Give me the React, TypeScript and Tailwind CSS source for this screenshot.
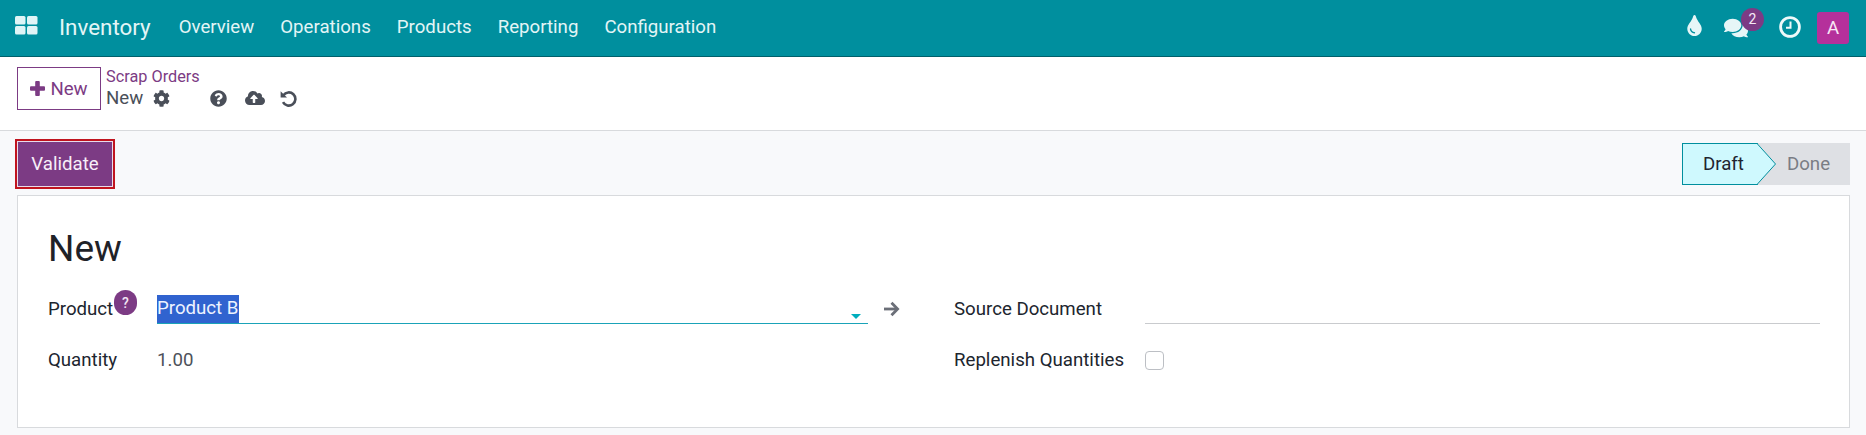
import { FaCog, FaQuestionCircle, FaCloudUploadAlt, FaTint, FaComments } from "react-icons/fa";

const menus = ["Overview", "Operations", "Products", "Reporting", "Configuration"];

function AppsIcon() {
  return (
    <svg width="23" height="19" viewBox="0 0 23 19" fill="#dff4f6">
      <rect x="0" y="0" width="10.5" height="8.5" rx="1.5" />
      <rect x="12" y="0" width="10.5" height="8.5" rx="1.5" />
      <rect x="0" y="10" width="10.5" height="8.5" rx="1.5" />
      <rect x="12" y="10" width="10.5" height="8.5" rx="1.5" />
    </svg>
  );
}

function ClockIcon() {
  return (
    <svg width="22" height="22" viewBox="0 0 22 22" fill="none" stroke="#eef9fa">
      <circle cx="11" cy="11" r="9.4" strokeWidth="2.8" />
      <path d="M11.5 5.5v6.2H7" strokeWidth="2" />
    </svg>
  );
}

function PlusIcon() {
  return (
    <svg width="15" height="15" viewBox="0 0 15 15" fill="#7c3b84">
      <rect x="5.2" y="0" width="4.6" height="15" rx="1" />
      <rect x="0" y="5.2" width="15" height="4.6" rx="1" />
    </svg>
  );
}

function UndoIcon() {
  return (
    <svg className="ml-[15px]" width="17" height="17" viewBox="0 0 17 17" fill="none" stroke="#4a4f59">
      <path d="M3.4 5.2A6.6 6.6 0 1 1 3 12.2" strokeWidth="2.6" />
      <path d="M.6 1.2v6.4H7Z" fill="#4a4f59" strokeWidth="0" />
    </svg>
  );
}

function ArrowIcon() {
  return (
    <svg className="mb-[7px] ml-[15px]" width="17" height="16" viewBox="0 0 17 16" fill="none" stroke="#6b6f78" strokeWidth="2.8">
      <path d="M1 8h13" />
      <path d="M8.5 1.8 14.6 8l-6.1 6.2" />
    </svg>
  );
}

function Navbar() {
  return (
    <div className="flex h-[57px] items-center justify-between border-b border-[#00606b] bg-[#008f9e] text-[#e3f5f6]">
      <div className="flex items-center pb-[2px]">
        <div className="mb-[4px] ml-[15px] flex">
          <AppsIcon />
        </div>
        <span className="ml-[21px] text-[22.4px] leading-none">Inventory</span>
        <div className="ml-[15px] flex">
          {menus.map((m) => (
            <span key={m} className="px-[13px] text-[18.67px] leading-none">
              {m}
            </span>
          ))}
        </div>
      </div>
      <div className="mr-[17px] flex items-center">
        <FaTint className="mb-[6px] text-[21px] text-[#e6f6f7]" />
        <div className="relative mb-[1px] ml-[19px]">
          <FaComments className="text-[24px] text-[#e6f6f7]" />
          <span className="absolute -top-[8px] left-[17px] flex h-[23px] w-[23px] items-center justify-center rounded-full bg-[#7c3b84] text-[14px] text-[#f5e9f6]">
            2
          </span>
        </div>
        <div className="mb-[3px] ml-[31px] flex">
          <ClockIcon />
        </div>
        <div className="ml-[16px] flex h-[32px] w-[32px] items-center justify-center rounded-[3px] bg-[#b5309b] text-[18.67px] text-[#f8e6f5]">
          A
        </div>
      </div>
    </div>
  );
}

function ControlPanel() {
  return (
    <div className="flex h-[74px] items-start border-b border-[#d8dadd] bg-white pl-[17px] pt-[10px]">
      <button className="flex h-[43px] w-[84px] items-center justify-center gap-[5px] border border-[#7c3b84] text-[18.67px] text-[#7c3b84]">
        <PlusIcon />
        New
      </button>
      <div className="ml-[5px] flex flex-col">
        <span className="text-[16.3px] leading-[20px] text-[#7c3b84]">Scrap Orders</span>
        <div className="flex items-center text-[#4a4f59]">
          <span className="text-[18.67px] leading-[23px]">New</span>
          <div className="mb-[1px] flex items-center">
            <FaCog className="ml-[10px] text-[17px]" />
            <FaQuestionCircle className="ml-[40px] text-[17px]" />
            <FaCloudUploadAlt className="ml-[18px] text-[20px]" />
            <UndoIcon />
          </div>
        </div>
      </div>
    </div>
  );
}

function ActionBar() {
  return (
    <div className="flex items-center justify-between pl-[15px] pr-[16px] pt-[8px]">
      <button className="h-[50px] w-[100px] border-[2px] border-[#c0141f] bg-[#7c3b84] text-[18.67px] text-[#f7eef8] outline outline-1 -outline-offset-[3px] outline-[#e8dcea]">
        Validate
      </button>
      <div className="flex h-[42px] text-[18.67px]">
        <div className="relative z-10 flex w-[76px] items-center justify-center border border-r-0 border-[#008f9e] bg-[#cff9fe] pl-[6px] text-[#1f2530]">
          Draft
          <svg className="absolute -right-[19px] -top-px" width="20" height="42" viewBox="0 0 20 42">
            <path d="M0 .5 18.5 21 0 41.5Z" fill="#cff9fe" />
            <path d="M0 .5 18.5 21 0 41.5" fill="none" stroke="#008f9e" strokeWidth="1" />
          </svg>
        </div>
        <div className="flex w-[92px] items-center justify-center bg-[#dee0e4] pl-[9px] text-[#7a7d84]">Done</div>
      </div>
    </div>
  );
}

function FormCard() {
  return (
    <div className="ml-[17px] mr-[16px] mt-[6px] h-[233px] border border-[#d8dadd] bg-white pl-[30px] pr-[29px] pt-[31px] text-[18.67px] text-[#20252e]">
      <h1 className="text-[37px] leading-[44px] text-[#1f2228]">New</h1>
      <div className="mt-[13px] flex">
        <div className="flex w-[906px] flex-col">
          <div className="flex h-[40px] items-end">
            <div className="relative w-[109px] pb-[3px] leading-[24px]">
              Product
              <span className="absolute -top-[7px] left-[66px] flex h-[25px] w-[23px] items-center justify-center rounded-full bg-[#7c3b84] text-[14px] font-medium text-[#f3e6f4]">
                ?
              </span>
            </div>
            <div className="relative flex h-[29px] w-[711px] border-b border-[#1aa3b8]">
              <span className="h-[28px] w-[82px] bg-[#3063cf] leading-[26px] text-[#eef3ff]">Product B</span>
              <span className="absolute right-[7px] top-[19px] h-0 w-0 border-x-[5px] border-t-[5px] border-x-transparent border-t-[#00aebd]" />
            </div>
            <ArrowIcon />
          </div>
          <div className="mt-[19px] flex h-[34px] items-center">
            <span className="w-[109px]">Quantity</span>
            <span className="text-[#4d515a]">1.00</span>
          </div>
        </div>
        <div className="flex flex-1 flex-col">
          <div className="flex h-[40px] items-end">
            <span className="w-[191px] pb-[3px] leading-[24px]">Source Document</span>
            <div className="h-[29px] flex-1 border-b border-[#c9cbce]" />
          </div>
          <div className="mt-[19px] flex h-[34px] items-center">
            <span className="w-[191px]">Replenish Quantities</span>
            <span className="h-[19px] w-[19px] rounded-[4px] border border-[#bcbfc4] bg-white" />
          </div>
        </div>
      </div>
    </div>
  );
}

export default function App() {
  return (
    <div className="h-[435px] w-[1866px] overflow-hidden bg-[#f8f9fb] font-['Roboto',sans-serif]">
      <Navbar />
      <ControlPanel />
      <ActionBar />
      <FormCard />
    </div>
  );
}
